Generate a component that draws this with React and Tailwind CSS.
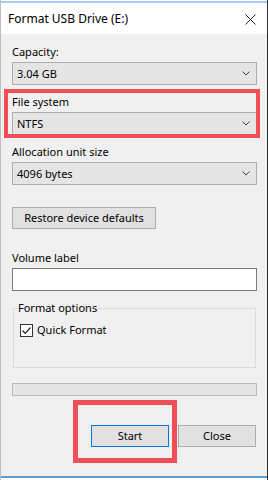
import React from "react";

function Chevron() {
  return (
    <svg width="8" height="5" viewBox="0 0 8 5" className="block">
      <path d="M0.5 0.5 L4 4 L7.5 0.5" fill="none" stroke="#444" strokeWidth="1" />
    </svg>
  );
}

function Select({ value }) {
  return (
    <div className="h-[23px] w-[245px] border border-[#adadad] bg-[#e5e5e5] flex items-center justify-between pl-[4px] pr-[6px]">
      <span className="leading-[16px]">{value}</span>
      <Chevron />
    </div>
  );
}

export default function App() {
  return (
    <div
      className="relative w-[268px] h-[480px] flex flex-col bg-[#f0f0f0] border-l border-l-[#bdbdbd] border-r border-r-[#2e2e2e] overflow-hidden text-[11px] text-black"
      style={{ fontFamily: '"Noto Sans", "Open Sans", sans-serif' }}
    >
      <div className="h-[1px] bg-white" />
      <div className="h-[2px] bg-[#a9cbed]" />
      <div className="h-[31px] bg-white flex items-center justify-between pl-[7px] pr-[11px]">
        <span className="text-[12px] leading-[16px] mt-[1px]">Format USB Drive (E:)</span>
        <svg width="11" height="11" viewBox="0 0 11 11" className="block mt-[1px]">
          <path d="M0.5 0.5 L10.5 10.5 M10.5 0.5 L0.5 10.5" stroke="#222" strokeWidth="1" fill="none" />
        </svg>
      </div>

      <div className="flex-1 flex flex-col pl-[11px] pt-[10px]">
        <div className="leading-[16px] h-[16px]">Capacity:</div>
        <div className="mt-[2px]">
          <Select value="3.04 GB" />
        </div>

        <div className="leading-[16px] h-[16px] mt-[9px]">File system</div>
        <div className="mt-[2px]">
          <Select value="NTFS" />
        </div>

        <div className="leading-[16px] h-[16px] mt-[9px]">Allocation unit size</div>
        <div className="mt-[2px]">
          <Select value="4096 bytes" />
        </div>

        <div className="mt-[22px] h-[22px] w-[144px] border border-[#adadad] bg-[#e1e1e1] flex items-center justify-center leading-[16px]">
          Restore device defaults
        </div>

        <div className="leading-[16px] h-[16px] mt-[21px]">Volume label</div>
        <div className="mt-[2px] h-[23px] w-[245px] border border-[#7a7a7a] bg-white" />

        <fieldset className="mt-[9px] ml-[1px] w-[243px] h-[68px] border border-[#dcdcdc] px-[4px]">
          <legend className="leading-[16px] px-0">Format options</legend>
          <div className="flex items-center mt-[6px] ml-[2px]">
            <div className="w-[13px] h-[13px] border border-[#333] bg-white flex items-center justify-center">
              <svg width="11" height="11" viewBox="0 0 11 11" className="block">
                <path d="M1.5 5.5 L4.2 8.3 L9.5 2.5" fill="none" stroke="#222" strokeWidth="1.2" />
              </svg>
            </div>
            <span className="ml-[4px] leading-[16px]">Quick Format</span>
          </div>
        </fieldset>

        <div className="mt-[15px] h-[13px] w-[245px] border border-[#bcbcbc] bg-[#e6e6e6]" />

        <div className="mt-[29px] flex justify-end gap-[9px] w-[245px] pr-[1px]">
          <div className="h-[22px] w-[78px] border border-[#0078d7] bg-[#e1e1e1] flex items-center justify-center leading-[16px]">
            Start
          </div>
          <div className="h-[22px] w-[78px] border border-[#adadad] bg-[#e1e1e1] flex items-center justify-center leading-[16px]">
            Close
          </div>
        </div>
      </div>

      <div className="h-[2px] bg-[#5b9bd8]" />
      <div className="h-[2px] bg-white" />

      <div className="absolute left-[3px] top-[89px] w-[256px] h-[49px] border-[4px] border-[#f04f59] pointer-events-none" />
      <div className="absolute left-[72px] top-[400px] w-[104px] h-[63px] border-[5px] border-[#f04f59] pointer-events-none" />
    </div>
  );
}
